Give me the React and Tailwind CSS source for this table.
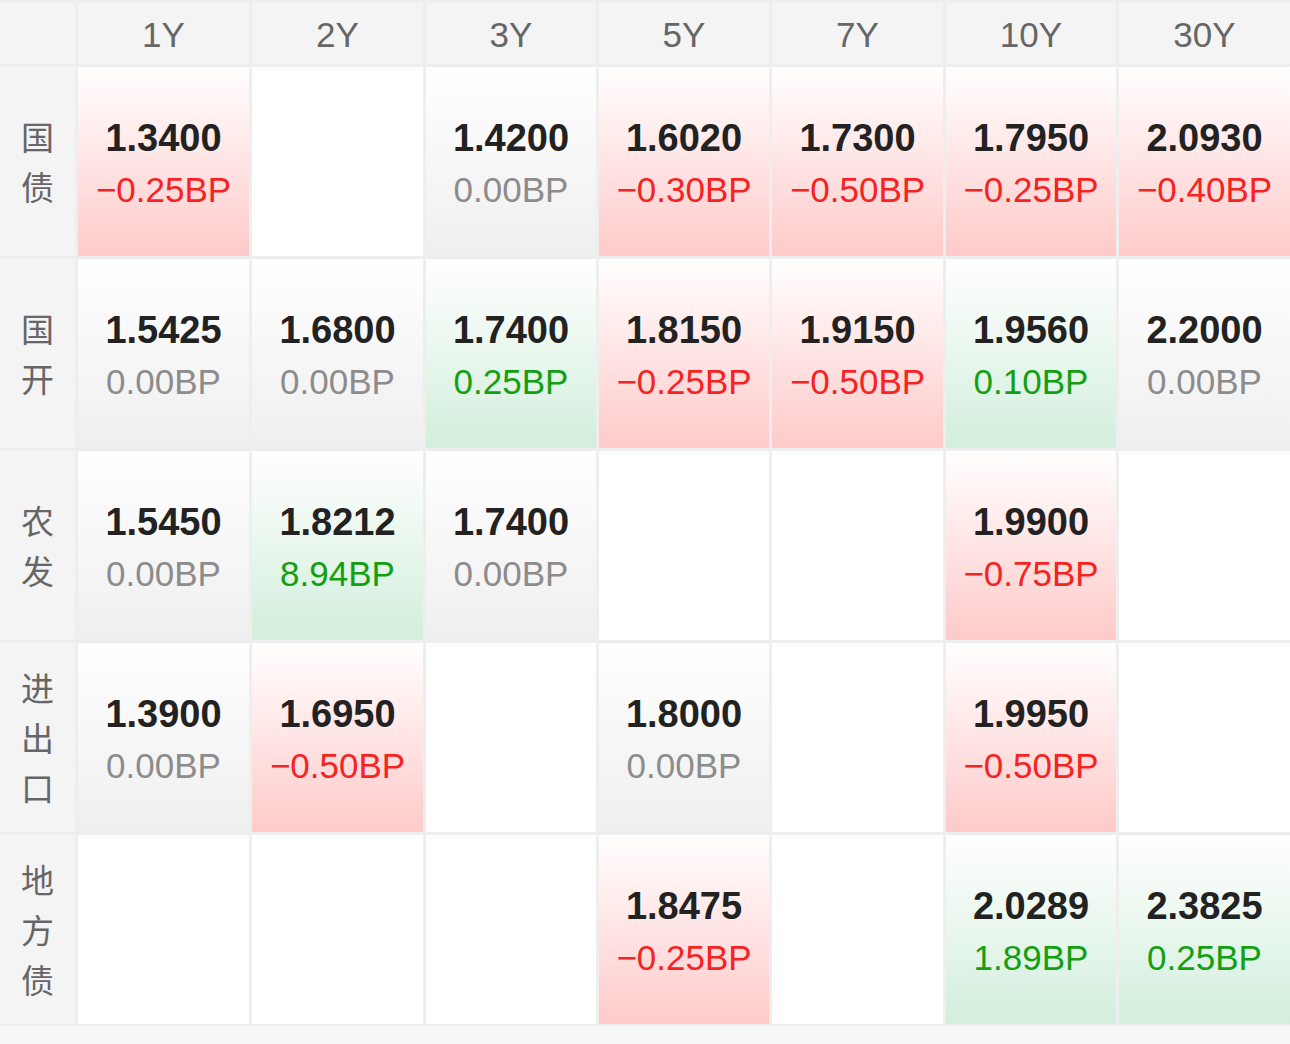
const TENORS = ['1Y', '2Y', '3Y', '5Y', '7Y', '10Y', '30Y'];

// [value, change, tone]  tone: r = down, g = up, n = flat
const ROWS = [
  {
    label: ['国', '债'],
    cells: [
      ['1.3400', '−0.25BP', 'r'],
      null,
      ['1.4200', '0.00BP', 'n'],
      ['1.6020', '−0.30BP', 'r'],
      ['1.7300', '−0.50BP', 'r'],
      ['1.7950', '−0.25BP', 'r'],
      ['2.0930', '−0.40BP', 'r'],
    ],
  },
  {
    label: ['国', '开'],
    cells: [
      ['1.5425', '0.00BP', 'n'],
      ['1.6800', '0.00BP', 'n'],
      ['1.7400', '0.25BP', 'g'],
      ['1.8150', '−0.25BP', 'r'],
      ['1.9150', '−0.50BP', 'r'],
      ['1.9560', '0.10BP', 'g'],
      ['2.2000', '0.00BP', 'n'],
    ],
  },
  {
    label: ['农', '发'],
    cells: [
      ['1.5450', '0.00BP', 'n'],
      ['1.8212', '8.94BP', 'g'],
      ['1.7400', '0.00BP', 'n'],
      null,
      null,
      ['1.9900', '−0.75BP', 'r'],
      null,
    ],
  },
  {
    label: ['进', '出', '口'],
    cells: [
      ['1.3900', '0.00BP', 'n'],
      ['1.6950', '−0.50BP', 'r'],
      null,
      ['1.8000', '0.00BP', 'n'],
      null,
      ['1.9950', '−0.50BP', 'r'],
      null,
    ],
  },
  {
    label: ['地', '方', '债'],
    cells: [
      null,
      null,
      null,
      ['1.8475', '−0.25BP', 'r'],
      null,
      ['2.0289', '1.89BP', 'g'],
      ['2.3825', '0.25BP', 'g'],
    ],
  },
];

const TONE = {
  r: { bg: 'bg-gradient-to-b from-[#ffffff] to-[#ffcaca]', text: 'text-[#f52323]' },
  g: { bg: 'bg-gradient-to-b from-[#ffffff] to-[#d2eedc]', text: 'text-[#12a012]' },
  n: { bg: 'bg-gradient-to-b from-[#ffffff] to-[#efefef]', text: 'text-[#8c8c8c]' },
};

function Cell({ data }) {
  if (!data) return <div className="bg-white" />;
  const [value, change, tone] = data;
  const t = TONE[tone];
  return (
    <div className={`${t.bg} flex flex-col items-center justify-center pt-[4px]`}>
      <div className="text-[38px] leading-[51px] font-semibold text-[#222222]">{value}</div>
      <div className={`text-[35px] leading-[51px] ${t.text}`}>{change}</div>
    </div>
  );
}

export default function App() {
  return (
    <div
      className="w-[1290px] h-[1044px] overflow-hidden bg-[#f7f7f7]"
      style={{ fontFamily: '"Liberation Sans", "Noto Sans CJK SC", sans-serif' }}
    >
      <div className="grid grid-cols-[75px_171px_171px_170px_170px_171px_170px_1fr] grid-rows-[61px_repeat(5,189px)] gap-[3px] bg-[#eeeeee] pt-[3px] pb-[2px]">
        <div className="bg-[#f4f4f4]" />
        {TENORS.map((t) => (
          <div key={t} className="bg-[#f4f4f4] flex items-center justify-center text-[35px] text-[#666666] pt-[4px]">
            {t}
          </div>
        ))}
        {ROWS.map((row) => (
          <div key={row.label.join('')} className="contents">
            <div className="bg-[#f4f4f4] flex flex-col items-center justify-center text-[33px] leading-[50px] text-[#666666] pt-[4px]">
              {row.label.map((ch) => (
                <span key={ch}>{ch}</span>
              ))}
            </div>
            {row.cells.map((c, i) => (
              <Cell key={i} data={c} />
            ))}
          </div>
        ))}
      </div>
    </div>
  );
}
